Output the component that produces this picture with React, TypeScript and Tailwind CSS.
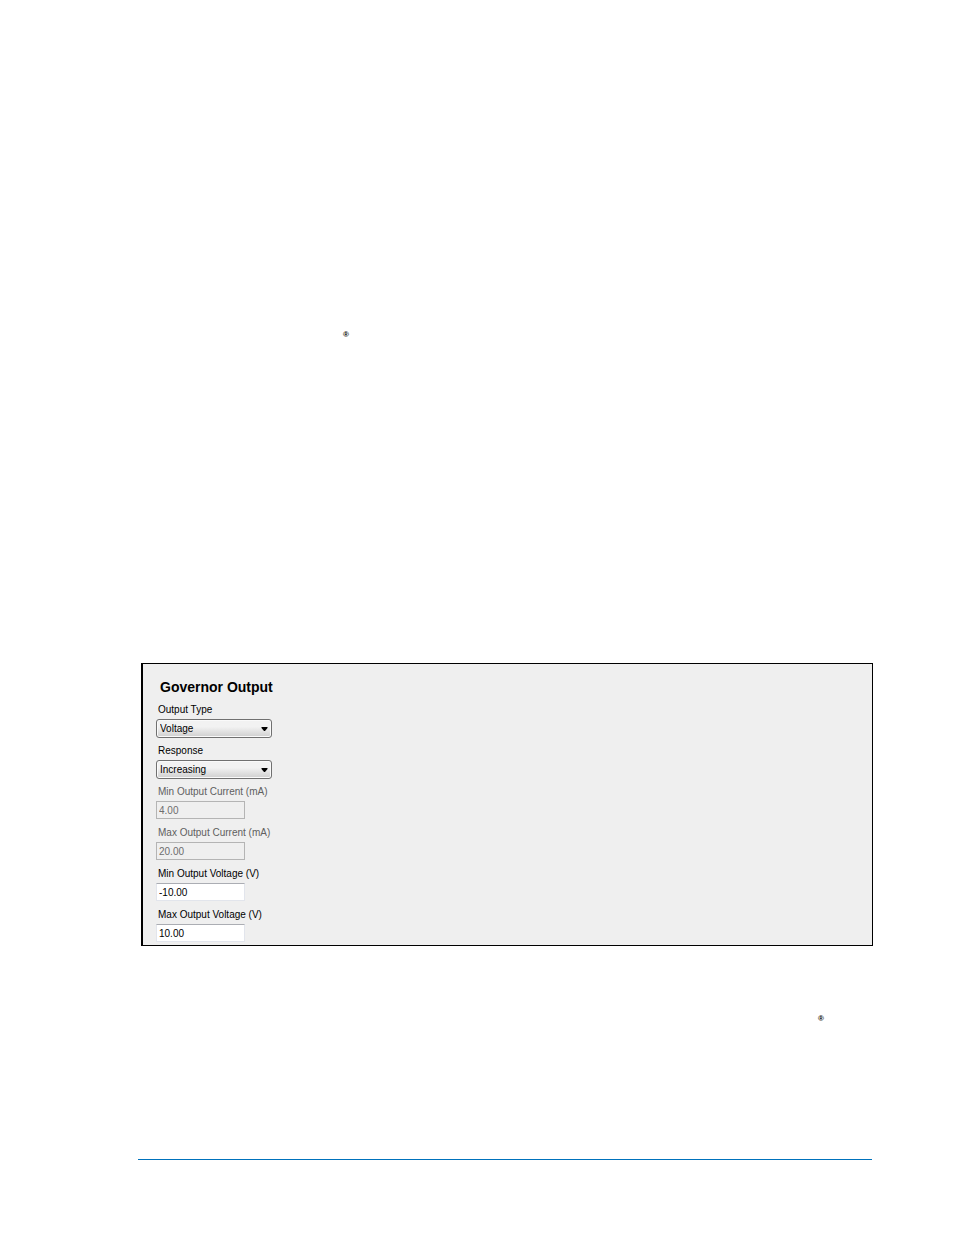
import { useState } from "react";
import { clsx } from "clsx";

const selects = [
  { id: "output-type", label: "Output Type", options: ["Voltage", "Current"] },
  { id: "response", label: "Response", options: ["Increasing", "Decreasing"] },
];

const inputs = [
  { id: "min-current", label: "Min Output Current (mA)", value: "4.00", disabled: true },
  { id: "max-current", label: "Max Output Current (mA)", value: "20.00", disabled: true },
  { id: "min-voltage", label: "Min Output Voltage (V)", value: "-10.00", disabled: false },
  { id: "max-voltage", label: "Max Output Voltage (V)", value: "10.00", disabled: false },
];

function SelectField({ id, label, options }: { id: string; label: string; options: string[] }) {
  return (
    <div className="flex flex-col items-start">
      <label htmlFor={id} className="px-[2px] leading-[18px]">
        {label}
      </label>
      <div className="relative w-[116px]">
        <select
          id={id}
          className="block h-[19px] w-full appearance-none rounded-[3px] border border-[#707070] bg-linear-to-b from-[#f2f2f2] from-40% to-[#cfcfcf] to-100% pr-5 pl-[3px] leading-[17px] shadow-[inset_0_0_0_1px_#fafafa]"
        >
          {options.map((option) => (
            <option key={option}>{option}</option>
          ))}
        </select>
        <svg
          viewBox="0 0 7 4"
          className="pointer-events-none absolute top-2 right-1 h-1 w-[7px]"
          aria-hidden="true"
        >
          <path d="M0.5 0h6v1L4 4H3L0.5 1z" fill="#000" />
        </svg>
      </div>
    </div>
  );
}

function TextField({ id, label, value, disabled }: (typeof inputs)[number]) {
  const [text, setText] = useState(value);

  return (
    <div className="flex flex-col items-start">
      <label htmlFor={id} className={clsx("px-[2px] leading-[18px]", disabled && "text-[#606060]")}>
        {label}
      </label>
      <input
        id={id}
        type="text"
        value={text}
        disabled={disabled}
        onChange={(e) => setText(e.target.value)}
        className={clsx(
          "h-[18px] w-[89px] border px-[2px] leading-4",
          disabled
            ? "border-[#b4b4b4] bg-[#efefef] text-[#6d6d6d]"
            : "border-[#e2e5ec] border-t-[#abadb3] bg-white text-black",
        )}
      />
    </div>
  );
}

export default function App() {
  return (
    <main className="flex min-h-screen flex-col bg-white pr-[81px] pb-[75px] pl-[138px] font-['Liberation_Sans',Arial,sans-serif] text-black">
      <p className="pt-[331px] pl-[205px] text-[8px] leading-2 font-bold">®</p>

      <section className="mt-[324px] ml-[3px] border border-l-2 border-black bg-[#efefef] pt-[14px] pb-[3px] pl-[13px] text-[10px]">
        <h1 className="pl-1 text-[14px] leading-[18px] font-bold">Governor Output</h1>
        <div className="mt-[5px] flex flex-col gap-1">
          {selects.map((field) => (
            <SelectField key={field.id} {...field} />
          ))}
        </div>
        <div className="mt-1 flex flex-col gap-[5px]">
          {inputs.map((field) => (
            <TextField key={field.id} {...field} />
          ))}
        </div>
      </section>

      <p className="mt-[69px] pr-[49px] text-right text-[8px] leading-2 font-bold">®</p>

      <hr className="mt-auto mr-px border-t border-[#0072bc]" />
    </main>
  );
}
